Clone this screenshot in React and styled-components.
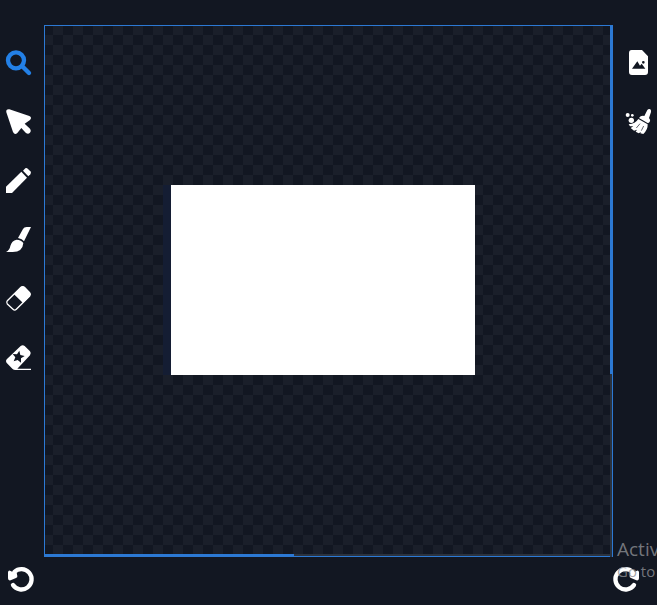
import React, { useState } from "react";
import styled, { createGlobalStyle } from "styled-components";

const colors = {
  page: "#121722",
  check: "#1a1f2a",
  accent: "#2c79d4",
  active: "#2380e6",
  icon: "#ffffff",
  track: "#2b333f",
};

const GlobalStyle = createGlobalStyle`
  * { box-sizing: border-box; }
  body {
    margin: 0;
    background: ${colors.page};
    font-family: "Open Sans", "Noto Sans", sans-serif;
  }
`;

const Editor = styled.main`
  position: relative;
  display: grid;
  grid-template-columns: 44px minmax(0, 1fr) 44px;
  grid-template-rows: minmax(0, 1fr) 48px;
  min-height: 100vh;
  padding-top: 25px;
  overflow: hidden;
`;

const Toolbar = styled.div`
  display: flex;
  flex-direction: column;
  align-items: ${(p) => (p.$side === "right" ? "flex-end" : "flex-start")};
  gap: 34px;
  padding: 25px 6px 0;
`;

const ToolButton = styled.button`
  width: 25px;
  height: 25px;
  padding: 0;
  border: 0;
  background: none;
  color: ${(p) => (p.$active ? colors.active : colors.icon)};
  cursor: pointer;
`;

const Icon = styled.svg`
  display: block;
  width: 100%;
  height: 100%;
  overflow: visible;
  fill: currentColor;
  transform: ${(p) => (p.$mirrored ? "scaleX(-1)" : "none")};
`;

const Stage = styled.section`
  position: relative;
  display: flex;
  align-items: center;
  justify-content: center;
  padding: 0 12px 22px 0;
  border: 1px solid ${colors.accent};
  background: repeating-conic-gradient(${colors.check} 0 25%, ${colors.page} 0 50%) -2px -1px / 20px 20px;
`;

const Canvas = styled.canvas`
  display: block;
  width: 304px;
  height: 190px;
  background: #ffffff;
  box-shadow: -8px 0 0 #141d33;
`;

const Scrollbar = styled.div`
  position: absolute;
  right: -1px;
  bottom: -1px;
  width: ${(p) => (p.$vertical ? "3px" : "calc(100% + 2px)")};
  height: ${(p) => (p.$vertical ? "calc(100% + 2px)" : "3px")};
  border: 0 solid ${colors.accent};
  border-width: ${(p) => (p.$vertical ? "0 1px 0 0" : "0 0 1px 0")};
  background: ${colors.track};
`;

const Thumb = styled.div`
  width: ${(p) => (p.$vertical ? "3px" : "44%")};
  height: ${(p) => (p.$vertical ? "calc(65% + 3px)" : "3px")};
  background: ${colors.accent};
`;

const History = styled.footer`
  grid-column: 1 / -1;
  display: flex;
  justify-content: space-between;
  align-items: flex-start;
  padding: 10px 18px 0 8px;
`;

const SystemNotice = styled.aside`
  position: absolute;
  right: 0;
  bottom: 24px;
  width: 40px;
  white-space: nowrap;
  pointer-events: none;
  color: rgba(142, 144, 148, 0.8);
`;

const NoticeTitle = styled.div`
  font-size: 19px;
  line-height: 24px;
`;

const NoticeText = styled.div`
  font-size: 15px;
  line-height: 20px;
`;

const drawings = {
  zoom: (
    <g fill="none" stroke="currentColor" strokeWidth="13">
      <circle cx="30" cy="31" r="24" />
      <path d="M48 48 69 69" strokeLinecap="round" />
    </g>
  ),
  select: (
    <path d="M10 1 70 21Q79 26 72 33L56 44 72 59Q77 66 71 72 66 77 59 71L46 57 34 72Q26 79 21 69L1 10Q-1 0 10 1Z" />
  ),
  pencil: (
    <>
      <path d="M0 56 46 11 63 29 18 75H0Z" />
      <path d="M51 8 58 1Q62-1 66 3L73 10Q77 14 73 19L67 25Z" />
    </>
  ),
  brush: (
    <>
      <path d="M75 0H62Q54 0 51 6L36 33Q49 35 54 43Z" />
      <path d="M32 38Q46 39 52 48 50 75 20 75H0Q11 69 13 57 17 41 32 38Z" />
    </>
  ),
  eraser: (
    <>
      <path
        d="M45 4Q50 0 55 4L71 20Q75 25 71 30L31 70Q26 75 21 70L4 54Q0 49 4 44Z"
        fill="none"
        stroke="currentColor"
        strokeWidth="4"
      />
      <path d="M24 25 44 3Q50-2 56 3L72 20Q77 25 72 30L51 51Z" />
    </>
  ),
  starEraser: (
    <path
      fillRule="evenodd"
      d="M44 3Q50-2 56 3L72 19Q77 25 72 31L34 71H75V75H28Q23 75 19 71L3 55Q-3 48 3 42ZM40 17 43 30 56 33 45 40 45 53 35 45 23 49 28 37 20 27 33 28Z"
    />
  ),
  turn: (
    <>
      <path
        d="M19 15A30.5 30.5 0 1 1 15 54"
        fill="none"
        stroke="currentColor"
        strokeWidth="13"
        strokeLinecap="round"
      />
      <path d="M0 16Q1 8 8 12L14 15 26 17 28 27Q29 31 24 33L8 40Q0 42 0 34Z" />
    </>
  ),
  image: (
    <path
      fillRule="evenodd"
      d="M17 0H48L66 19V66Q66 75 57 75H18Q9 75 9 66V9Q9 0 17 0ZM18 56H58L47 41 42 47 34 34ZM52 33A4 4 0 1 0 52 41 4 4 0 1 0 52 33Z"
    />
  ),
  clean: (
    <>
      <circle cx="5" cy="18" r="6" />
      <circle cx="19" cy="19" r="4" />
      <circle cx="16" cy="34" r="8" />
      <path d="M64 3Q68-2 73 1 76 4 75 9L69 27Q75 33 71 39L66 43 39 27Q44 19 55 21Z" />
      <path d="M37 30 65 46Q66 62 52 75L43 73 45 69 38 73 29 68 33 62 24 65 14 57 22 52 12 52 8 46Q28 44 37 30Z" />
      <path d="M53 51 46 65M42 44 31 57" stroke={colors.page} strokeWidth="2" />
    </>
  ),
};

const leftTools = [
  ["zoom", "Zoom"],
  ["select", "Select"],
  ["pencil", "Pencil"],
  ["brush", "Brush"],
  ["eraser", "Eraser"],
  ["starEraser", "Magic eraser"],
];

const rightTools = [
  ["image", "Insert image"],
  ["clean", "Clear canvas"],
];

function Tool({ name, label, active, mirrored, onClick }) {
  return (
    <ToolButton type="button" aria-label={label} $active={active} onClick={onClick}>
      <Icon viewBox="0 0 75 75" aria-hidden="true" $mirrored={mirrored}>
        {drawings[name]}
      </Icon>
    </ToolButton>
  );
}

export default function App() {
  const [tool, setTool] = useState("zoom");
  return (
    <>
      <GlobalStyle />
      <Editor>
        <Toolbar>
          {leftTools.map(([name, label]) => (
            <Tool key={name} name={name} label={label} active={tool === name} onClick={() => setTool(name)} />
          ))}
        </Toolbar>
        <Stage>
          <Canvas width="304" height="190" aria-label="Drawing canvas" />
          <Scrollbar>
            <Thumb />
          </Scrollbar>
          <Scrollbar $vertical>
            <Thumb $vertical />
          </Scrollbar>
        </Stage>
        <Toolbar $side="right">
          {rightTools.map(([name, label]) => (
            <Tool key={name} name={name} label={label} />
          ))}
        </Toolbar>
        <History>
          <Tool name="turn" label="Undo" />
          <Tool name="turn" label="Redo" mirrored />
        </History>
        <SystemNotice>
          <NoticeTitle>Activ</NoticeTitle>
          <NoticeText>Go to</NoticeText>
        </SystemNotice>
      </Editor>
    </>
  );
}
